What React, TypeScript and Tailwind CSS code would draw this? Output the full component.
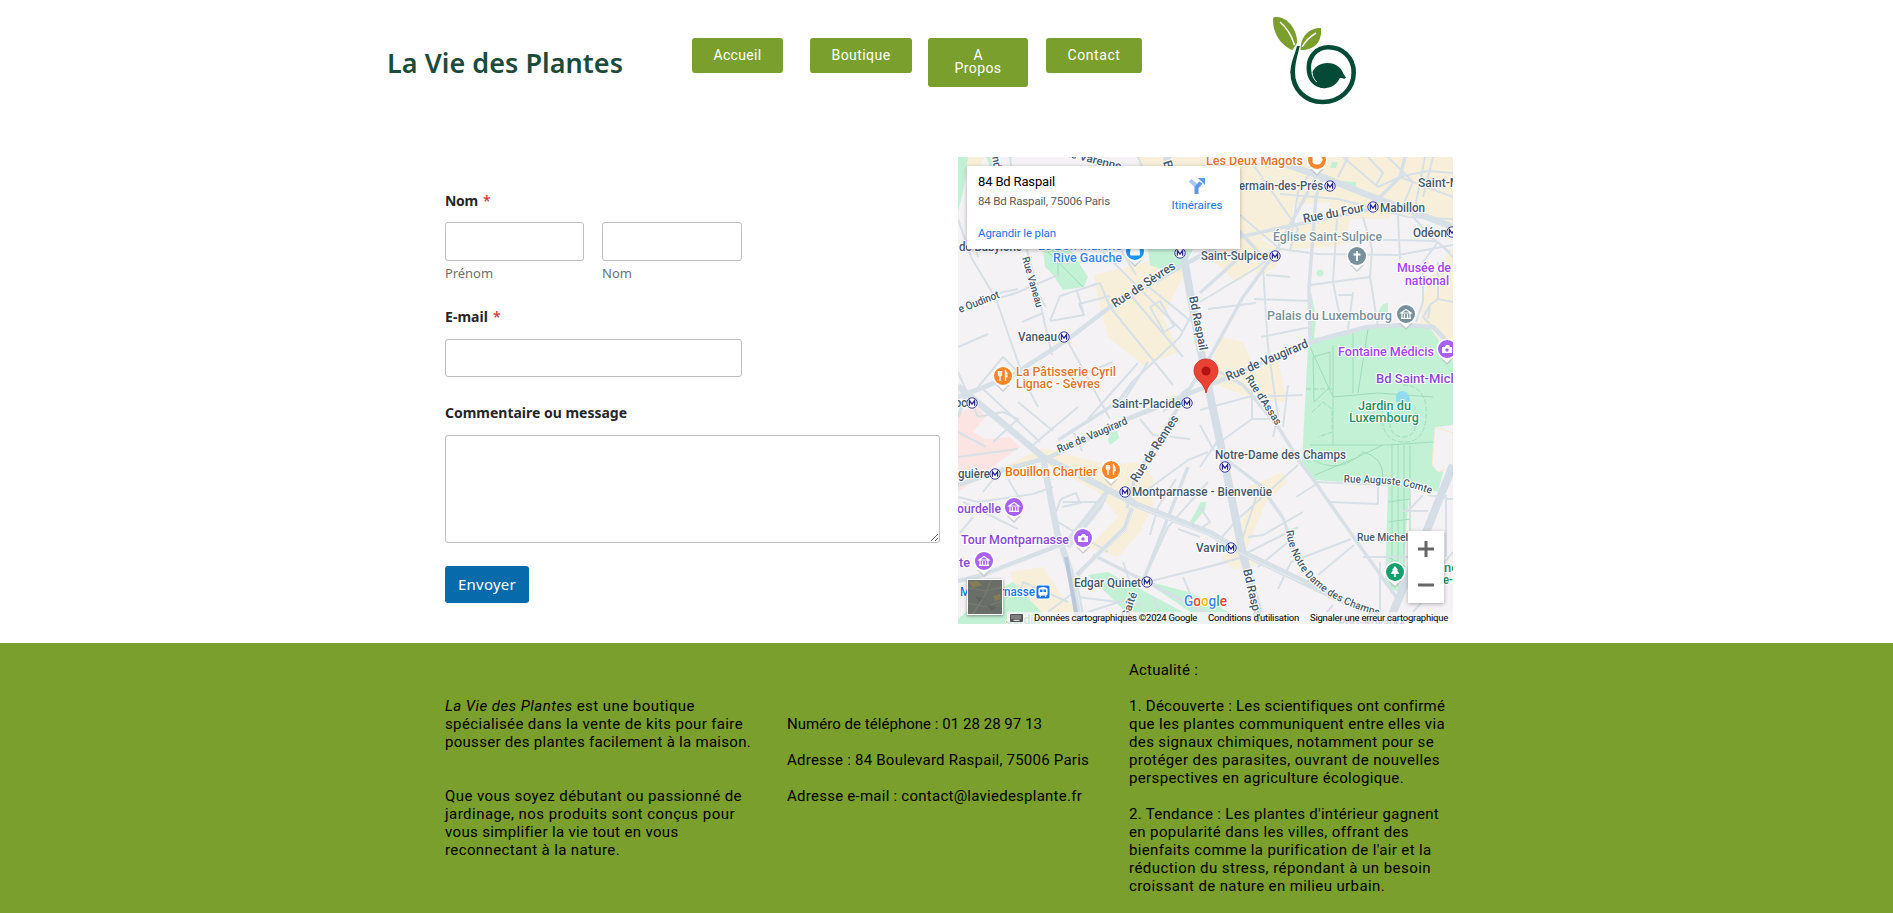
import { useLayoutEffect, useRef, useState } from 'react';
import type { ReactNode } from 'react';

/** A single line of text whose tracking is adjusted to fill `width` pixels. */
function Line({ width, className = '', children }: { width: number; className?: string; children: ReactNode }) {
  const ref = useRef<HTMLSpanElement>(null);
  const [spacing, setSpacing] = useState(0);
  useLayoutEffect(() => {
    const el = ref.current;
    if (!el) return;
    const count = (el.textContent ?? '').length;
    const natural = el.getBoundingClientRect().width - spacing * count;
    setSpacing((width - natural) / count);
  }, [width]);
  return (
    <span ref={ref} className={`inline-block whitespace-nowrap ${className}`} style={{ letterSpacing: `${spacing}px` }}>
      {children}
    </span>
  );
}

const NAV = [
  { label: ['Accueil'], widths: [48], box: 'ml-0 w-[91px] h-[35px]' },
  { label: ['Boutique'], widths: [59], box: 'ml-[27px] w-[102px] h-[35px]' },
  { label: ['A', 'Propos'], widths: [9, 47], box: 'ml-4 w-[100px] h-[49px]' },
  { label: ['Contact'], widths: [53], box: 'ml-[18px] w-[96px] h-[35px]' },
];

function Logo() {
  return (
    <svg className="mt-4 ml-[131px] h-[90px] w-[86px]" viewBox="1273 16 86 90" fill="none">
      <path d="M1273.300 17.500C1286 14.500 1297.500 29 1297 43L1292.500 50C1281 46 1271.500 32 1273.300 17.500Z" fill="#7a9f2d" />
      <path d="M1280 22C1287 28 1291.500 35 1294.500 45" stroke="#fff" strokeWidth="1.500" />
      <path d="M1300.500 50C1300.500 36 1309 28 1321 28C1322 42 1315 50 1300.500 50Z" fill="#7a9f2d" />
      <path d="M1302 47C1306 40 1311 36 1316 33" stroke="#fff" strokeWidth="1.500" />
      <path
        d="M1297 46L1299.800 46C1297.500 56 1295.200 62 1295 73H1290.500C1290.500 62 1294.500 56 1297 46Z"
        fill="#044b37"
      />
      <path
        d="M1292.700 72C1292.700 89 1305 102 1322.500 102C1340 102 1353.700 89.500 1353.700 72.500C1353.700 57 1342 47.300 1328.500 47.300C1316.500 47.300 1308.800 56.500 1308.800 67.500C1308.800 79 1315 86 1325 86"
        stroke="#044b37"
        strokeWidth="4.600"
        strokeLinecap="round"
      />
      <path d="M1312.500 72C1315 66.500 1320 63 1327.500 63C1335.500 63 1341 67 1343.500 74L1346 77.500L1344.500 78.800L1340 77.800C1337 84.500 1331 88.200 1323.500 88.200C1316 87.500 1312.500 80 1312.500 72Z" fill="#044b37" />
      <path d="M1312 73C1312.800 77 1314 79.500 1316.800 82" stroke="#dfe9e5" strokeWidth="1" />
    </svg>
  );
}

function Header() {
  return (
    <header className="flex h-[157px] items-start pl-[387px]">
      <h1 className="mt-[45px] w-[305px] font-['Noto_Sans'] text-[27px] leading-[36px] font-semibold text-[#1c4b3c]">
        <Line width={236}>La Vie des Plantes</Line>
      </h1>
      <nav className="flex items-start pt-[38px]">
        {NAV.map((item) => (
          <a
            key={item.label.join(' ')}
            href="#"
            className={`flex flex-col items-center rounded-[3px] bg-[#7a9f2d] pt-[11px] text-[14px] leading-[13px] text-white ${item.box}`}
          >
            {item.label.map((word, i) => (
              <Line key={word} width={item.widths[i]}>
                {word}
              </Line>
            ))}
          </a>
        ))}
      </nav>
      <Logo />
    </header>
  );
}

function Label({ text, width, required }: { text: string; width: number; required?: boolean }) {
  return (
    <label className="flex h-5 gap-[5px] text-[14px] leading-5 font-bold text-[#262628]">
      <Line width={width}>{text}</Line>
      {required && <span className="font-medium text-[#d63637]">*</span>}
    </label>
  );
}

const FIELD = 'block rounded-[3px] border border-[#bfbfbf] bg-white outline-none';

function ContactForm() {
  return (
    <form className="w-[495px] pt-[34px] font-['Noto_Sans']">
      <Label text="Nom" width={33} required />
      <div className="mt-[11px] flex gap-[18px]">
        <div className="w-[139px]">
          <input className={`${FIELD} h-[39px] w-full`} />
          <div className="mt-[2px] h-[21px] text-[13px] leading-5 text-[#6f6f71]">
            <Line width={48}>Prénom</Line>
          </div>
        </div>
        <div className="w-[140px]">
          <input className={`${FIELD} h-[39px] w-full`} />
          <div className="mt-[2px] h-[21px] text-[13px] leading-5 text-[#6f6f71]">
            <Line width={30}>Nom</Line>
          </div>
        </div>
      </div>
      <div className="mt-[23px]">
        <Label text="E-mail" width={43} required />
      </div>
      <input className={`${FIELD} mt-3 h-[38px] w-[297px]`} />
      <div className="mt-[26px]">
        <Label text="Commentaire ou message" width={182} />
      </div>
      <textarea className={`${FIELD} mt-3 h-[108px] w-full resize`} />
      <button type="button" className="mt-[23px] flex h-[37px] w-[84px] items-center rounded-[3px] bg-[#066aab] pb-px pl-[13px] text-[15px] leading-5 text-white">
        <Line width={58}>Envoyer</Line>
      </button>
    </form>
  );
}

type MapLabel = { t: string; x: number; y: number; w: number; a?: number; c?: string; s?: number };

const SLATE = '#44586a';
const LABELS: MapLabel[] = [
  { t: 'de Varenne', x: 106, y: -1, w: 58, a: 14, s: 11 },
  { t: 'nd', x: 34, y: 0, w: 12, a: 80, s: 11 },
  { t: 'B', x: 205, y: 5, w: 8, a: 72, s: 12 },
  { t: 'de Babylone', x: 1, y: 94, w: 63 },
  { t: 'Le Bon Marché', x: 80, y: 93, w: 84, c: '#3487e8' },
  { t: 'Rive Gauche', x: 95, y: 105, w: 69, c: '#3487e8' },
  { t: 'Rue Vaneau', x: 64, y: 101, w: 52, a: 74, s: 10.5 },
  { t: 'Rue de Sèvres', x: 157, y: 151, w: 73, a: -33 },
  { t: 'e Oudinot', x: 2, y: 156, w: 43, a: -21, s: 11 },
  { t: 'Vaneau', x: 60, y: 184, w: 39 },
  { t: 'La Pâtisserie Cyril', x: 58, y: 218.5, w: 100, c: '#e0752a' },
  { t: 'Lignac - Sèvres', x: 58, y: 231, w: 84, c: '#e0752a' },
  { t: 'Bd Raspail', x: 231, y: 140, w: 55, a: 79, s: 12 },
  { t: 'Les Deux Magots', x: 248, y: 8, w: 97, c: '#e0752a' },
  { t: 'ermain-des-Prés', x: 281, y: 33, w: 84 },
  { t: 'Saint-Michel', x: 460, y: 30, w: 68 },
  { t: 'Mabillon', x: 422, y: 55, w: 45 },
  { t: 'Rue du Four', x: 346, y: 66, w: 62, a: -11 },
  { t: 'Odéon', x: 455, y: 80, w: 34 },
  { t: 'Église Saint-Sulpice', x: 315, y: 84, w: 109, c: '#78909c' },
  { t: 'Saint-Sulpice', x: 243, y: 103, w: 67 },
  { t: 'Musée de', x: 439, y: 115, w: 54, c: '#a142f4' },
  { t: 'national', x: 447, y: 128, w: 44, c: '#a142f4' },
  { t: 'Palais du Luxembourg', x: 309, y: 163, w: 125, c: '#78909c' },
  { t: 'Rue de Vaugirard', x: 270, y: 224, w: 88, a: -23 },
  { t: 'Fontaine Médicis', x: 380, y: 199, w: 96, c: '#a142f4' },
  { t: 'Bd Saint-Michel', x: 418, y: 226, w: 92, c: '#8947d6' },
  { t: 'oc', x: -3, y: 250, w: 12 },
  { t: 'Saint-Placide', x: 154, y: 251, w: 69 },
  { t: 'Rue de Vaugirard', x: 101, y: 296, w: 75, a: -23, s: 11 },
  { t: 'Rue de Rennes', x: 179, y: 326, w: 77, a: -57 },
  { t: 'guière', x: 0, y: 321, w: 32 },
  { t: 'Bouillon Chartier', x: 47, y: 319, w: 92, c: '#e8710a' },
  { t: 'Montparnasse - Bienvenüe', x: 174, y: 339, w: 140 },
  { t: 'ourdelle', x: -1, y: 355.5, w: 44, c: '#8947d6' },
  { t: 'Tour Montparnasse', x: 3, y: 387, w: 108, c: '#8947d6' },
  { t: 'te', x: 1, y: 410, w: 11, c: '#8947d6' },
  { t: 'Montparnasse', x: 2, y: 438.5, w: 75, c: '#1a73e8' },
  { t: 'Edgar Quinet', x: 116, y: 429.5, w: 67 },
  { t: 'Gaîté', x: 170, y: 462, w: 27, a: -70, s: 11 },
  { t: 'Jardin', x: 48, y: 467, w: 34, c: '#2b9a6b' },
  { t: 'Port-Royal', x: 380, y: 470, w: 54 },
  { t: 'Jardin du', x: 400, y: 253, w: 53, c: '#25905f' },
  { t: 'Luxembourg', x: 391, y: 265, w: 70, c: '#25905f' },
  { t: "Rue d'Assas", x: 287, y: 221, w: 57, a: 57, s: 11 },
  { t: 'Notre-Dame des Champs', x: 257, y: 302, w: 131 },
  { t: 'Rue Michelet', x: 399, y: 384, w: 60, s: 11.5 },
  { t: 'Vavin', x: 238, y: 395, w: 29 },
  { t: 'Bd Raspail', x: 285, y: 413, w: 55, a: 77, s: 12 },
  { t: 'ne', x: 486, y: 415, w: 14, c: '#25905f' },
  { t: 'e-F', x: 485, y: 427, w: 16, c: '#25905f' },
];

const METRO: [number, number][] = [
  [106, 180], [222, 96], [372, 29], [415, 50], [494, 75], [317, 99], [14, 246],
  [229, 246], [37, 317], [167, 335], [189, 425], [267, 310], [273, 391], [441, 468],
];

const PINS: { x: number; y: number; c: string; k: string }[] = [
  { x: 45, y: 219, c: '#f5862b', k: 'food' },
  { x: 153, y: 313, c: '#f5862b', k: 'food' },
  { x: 359, y: 3, c: '#f5862b', k: 'cup' },
  { x: 177, y: 94, c: '#1a94f5', k: 'bag' },
  { x: 399, y: 99, c: '#78909c', k: 'cross' },
  { x: 448, y: 157, c: '#78909c', k: 'museum' },
  { x: 489, y: 192, c: '#a860f5', k: 'camera' },
  { x: 56, y: 350, c: '#a860f5', k: 'museum' },
  { x: 125, y: 381, c: '#a860f5', k: 'camera' },
  { x: 26, y: 404, c: '#a860f5', k: 'museum' },
  { x: 437, y: 415, c: '#17a06d', k: 'tree' },
];

function Glyph({ kind }: { kind: string }) {
  switch (kind) {
    case 'food':
      return <path d="M-3 5V0M-4.500-5V-1.500Q-4.500 0-3 0T-1.500-1.500V-5M-3-5V-1M2.500 5V-5Q4.500-3 4 .5H2.500" stroke="#fff" strokeWidth="1.300" fill="none" />;
    case 'cup':
      return <path d="M-4-3H4V2Q4 4 1 4H-1Q-4 4-4 2ZM4-2Q7-1 4 1.500" stroke="#fff" strokeWidth="1" fill="#fff" />;
    case 'bag':
      return <path d="M-4-3H4L4.500 4H-4.500ZM-2-3Q0-7 2-3" fill="#fff" stroke="#fff" />;
    case 'cross':
      return <path d="M0-5V5M-3.500-1.500H3.500" stroke="#fff" strokeWidth="1.800" />;
    case 'museum':
      return <path d="M-5-1L0-4.500L5-1ZM-4-1V4M4-1V4M-1.500 0V4M1.500 0V4M-5 4.300H5" stroke="#fff" strokeWidth="1.200" fill="none" />;
    case 'camera':
      return (
        <g>
          <path d="M-5-2H-2L-1-4H2L3-2H5V4H-5Z" fill="#fff" />
          <circle cy="1" r="1.700" fill="#a860f5" />
        </g>
      );
    default:
      return <path d="M0-6L3-2H2L4.500 2H.8V5H-.8V2H-4.500L-2-2H-3Z" fill="#fff" />;
  }
}

const THIN_ROADS = [
  'M0 62L13 100L38 142L67 225L80 250', 'M38 142L58 136L100 118', 'M0 152L45 135L60 132', 'M52 0L60 60L75 115L94 198',
  'M20 100L10 60', 'M64 165L85 156M70 120L88 150', 'M92 164L102 139L142 126L152 150M92 164L126 158L121 147L152 139M126 158L119 134',
  'M0 215L20 260M0 190L30 177M20 230L45 200L60 215', 'M120 250L75 288M155 205L118 220M180 206L130 262', 'M25 232L82 285M60 245L95 274',
  'M109 183L152 262M152 150L215 228M170 135L225 200M185 125L240 170', 'M192 150L202 144L216 169L206 175Z', 'M145 95L225 175M160 88L178 118',
  'M172 227L222 180L240 145M165 245L190 205', 'M182 262L195 278L232 282M172 262L230 240M205 255L230 231', 'M114 272L124 294',
  'M20 260L45 255L60 262L35 285M0 275L28 290M0 300L60 292', 'M0 340L20 345L75 337L95 330M25 335L45 310M5 345L60 372M15 360L2 376',
  'M103 342L118 336L122 346L104 350M103 342L98 355M50 322L65 347L55 355', 'M140 345L105 345M100 365L150 395',
  'M192 378L200 350L218 322M185 336L230 303L250 295', 'M185 424L210 370L250 325', 'M189 425L270 405M165 405L172 425M119 440L185 448M130 455L170 442',
  'M60 440L65 425L110 445M90 455L120 432', 'M240 60L200 82M180 0L198 40L225 90', 'M282 58L322 92L300 110L242 145', 'M245 30L282 62M290 0L340 72L332 92',
  'M322 92L360 97L440 98L495 88', 'M305 110L310 190L320 260L315 280', 'M296 142L352 144M250 152L298 146M308 118L332 120M303 180L352 170',
  'M352 128L412 120L414 92L405 60M379 62L375 125L382 160M395 135L390 172M380 138L394 138M412 120L420 170',
  'M322 37L380 42L450 60L495 62M334 75L340 35L362 0', 'M385 0L420 30L442 20L495 40M430 0L455 25L440 60L442 102M467 0L455 60L478 85',
  'M392 82L478 84L492 95M480 85L465 105L465 145L458 165M480 85L495 100', 'M440 20L470 14L495 16M475 0L465 40',
  'M472 148L480 142L495 145M472 148L465 160L485 180M480 142L480 105M472 148L470 162', 'M390 0L380 20M410 0L425 16L418 28',
  'M242 253L290 240L345 238M255 290L294 262L319 262M294 262V230M325 270L330 228', 'M242 310L262 280M242 268L255 292L269 303',
  'M262 382L280 362L340 308M290 380L305 378L345 355M302 328L285 380M285 398L340 370', 'M338 340L357 328M370 345L420 347V330M357 325L430 328',
  'M242 412L285 400M300 410L330 385M320 432L333 405L393 382M360 418L396 388M405 400L450 400M399 380L442 384', 'M465 338L450 354M445 354H470M470 338L495 342M488 338V400M470 425L495 395M455 455L486 420M365 460L375 448M422 455V405',
  'M242 350L252 365L242 372M242 380L220 372', 'M195 440L205 465M225 420L245 467',
];

const MID_ROADS = [
  'M369 0L360 16L317 96L285 140L252 200L232 231L177 321L169 351', 'M282 80L322 71L409 53L442 20L447 0', 'M242 136L282 100L317 96',
  'M262 215L285 228L319 268L342 305L357 325L399 385L439 441', 'M269 303L302 328L325 361L342 408L372 436L429 462', 'M352 185L351 130L358 40L365 18',
  'M242 30L282 75L305 100', 'M135 398L189 425L252 458L290 468', 'M230 310L185 424', 'M0 260L8 238M100 283L160 245L175 225',
];

const WIDE_ROADS = [
  'M0 240L52 220L109 183L152 150L222 110L262 88L282 78', 'M495 190L475 170L445 168L409 170L352 185L259 225L172 261L92 300L35 316L0 328',
  'M149 335L109 385L25 418L0 424', 'M174 351L167 371L119 418', 'M177 345L150 332L142 350L110 390',
];

const MAIN_ROADS = [
  'M0 229L35 258L85 300L145 330L179 348L252 376L289 398L352 428L430 465', 'M305 0L365 20L415 40L495 70', 'M85 301L99 375L117 428L125 468',
];

function Roads({ paths, w }: { paths: string[]; w: number }) {
  return (
    <g fill="none" stroke="#d7e0e7" strokeWidth={w} strokeLinejoin="round">
      {paths.map((d) => (
        <path key={d} d={d} />
      ))}
    </g>
  );
}

function MapCanvas() {
  return (
    <svg className="block h-[467px] w-[495px] font-['Roboto']" viewBox="0 0 495 467">
      <rect width="495" height="467" fill="#f4f2f4" />
      <g fill="#f8efda">
        <path d="M0 0H26L20 20H0ZM180 0H245V14H180ZM136 118L225 96L230 110L205 160L222 195L185 208L150 180L142 150Z" />
        <path d="M240 0H495V68L435 55L420 80L372 90L325 92L300 112L278 125L240 90Z" />
        <path d="M282 85L322 80L318 110L300 120ZM465 140L480 110L495 90V192L462 168Z" />
        <path d="M262 180L285 185L298 215L320 200L328 245L300 243L250 225ZM48 309L85 291L150 308L180 305L195 320V350L182 375L160 400L130 390L160 360L140 335L85 305Z" />
        <path d="M290 330L325 315L330 325L308 345L288 395L280 372L295 345ZM262 400L280 390L300 408L275 412ZM52 415L85 410L105 440L125 455L90 467L60 440Z" />
      </g>
      <path d="M392 62H436V82H388ZM335 48L372 45L368 62L335 68ZM302 82L330 78L332 92L318 90Z" fill="#f4f2f4" />
      <path d="M0 255L20 250L28 260L15 275L28 282L52 280L62 290L0 335Z" fill="#fce4e3" />
      <g fill="#c3f1d5">
        <path d="M0 0H10L5 35L0 55ZM28 0H42L36 18ZM85 92L112 92L130 120L126 130L105 133L95 118L87 110ZM190 92H235L228 106L210 115L192 108Z" />
        <path d="M350 186L409 169L472 171L482 185L495 205V268L477 270L474 308L485 315L480 335L455 328L452 331L442 436L427 428L430 328L357 323L344 305L348 228Z" />
        <path d="M353 135L358 160L356 183L352 183ZM374 5L380 5L378 11L372 11ZM385 24L398 25L398 32L386 30ZM425 147L430 146V155L420 155Z" />
        <circle cx="362" cy="116" r="3.500" />
        <path d="M152 275L159 274L161 281L152 288L150 283ZM231 367L243 345L248 345L247 353L235 367Z" />
        <path d="M130 418L150 415L225 455L290 467H180ZM0 462L20 445L55 425L95 467H0ZM185 423L230 435L262 450L290 467H250Z" />
        <path d="M456 290L470 290L472 308L485 315L480 333L455 322Z" />
      </g>
      <g fill="none" stroke="#9fdcba" strokeWidth="1">
        <path d="M352 190L375 240L420 236L475 240M375 188V288M352 288H430L475 285M395 175V236M410 172L400 236M355 200L372 195V230L356 245ZM350 300Q380 320 405 295Q425 300 425 320M357 318L400 300L425 288M434 288V430M440 288V430M446 288V430M452 288V400" />
        <path d="M425 250Q420 285 447 285Q470 285 468 250Q465 228 445 228M432 252V270Q435 280 446 280Q458 278 457 268V250M348 232L374 232M354 255L365 245L374 252V275L360 280" strokeDasharray="5 2" />
        <path d="M430 345L452 342M430 365L452 362M430 385L450 382M430 400L448 410M90 95L125 130M100 95V120" />
      </g>
      <path d="M438 243Q437 234 445 234Q453 236 452 246L438 245Z" fill="#90dbef" />
      <path d="M474 308L477 270L495 276V310L480 315Z" fill="#f4f2f4" stroke="#f8e9c8" />
      <Roads paths={THIN_ROADS} w={2} />
      <Roads paths={MID_ROADS} w={3.4} />
      <Roads paths={WIDE_ROADS} w={4.6} />
      <Roads paths={MAIN_ROADS} w={6.5} />
      <g fill="none" stroke="#d5dee6" strokeWidth="8">
        <path d="M209 0L225 96L240 180L252 238L267 308L285 398L304 468" />
        <path d="M495 308L455 408L430 467" />
      </g>
      <path d="M108 400L120 467" stroke="#b9c8d8" strokeWidth="4" />
      <g fill="none" stroke="#f4f2f4" strokeWidth="0.800" opacity=".8">
        <path d="M180 350L252 378L289 400L345 426M149 338L109 388L30 418M174 355L169 371L125 415M110 380L125 467" />
      </g>

      <g fontWeight="500" stroke="#fff" strokeWidth="2.200" strokeLinejoin="round" paintOrder="stroke">
        {LABELS.map((l, i) => (
          <text
            key={i}
            transform={`translate(${l.x} ${l.y}) rotate(${l.a ?? 0})`}
            fill={l.c ?? SLATE}
            fontSize={l.s ?? 12.5}
            textLength={l.w}
            lengthAdjust="spacingAndGlyphs"
          >
            {l.t}
          </text>
        ))}
        <path id="comte" d="M386 325.500C412 326 445 325 475 338" fill="none" stroke="none" />
        <path id="champs" d="M328 374C333 406 352 442 425 460" fill="none" stroke="none" />
        <text fill={SLATE} fontSize="10.500">
          <textPath href="#comte" textLength="88" lengthAdjust="spacingAndGlyphs">Rue Auguste Comte</textPath>
        </text>
        <text fill={SLATE} fontSize="10.500">
          <textPath href="#champs" textLength="134" lengthAdjust="spacingAndGlyphs">Rue Notre Dame des Champs</textPath>
        </text>
      </g>

      {METRO.map(([x, y]) => (
        <g key={`${x}-${y}`} transform={`translate(${x} ${y})`}>
          <circle r="5.200" fill="#fff" stroke="#3d3d9c" strokeWidth="1" />
          <path d="M-2.600 2.700V-2.500L0 1.200L2.600-2.500V2.700" fill="none" stroke="#29298f" strokeWidth="1.300" />
        </g>
      ))}

      {PINS.map((p) => (
        <g key={`${p.x}-${p.y}`} transform={`translate(${p.x} ${p.y})`}>
          <path d="M-7 9L0 16L7 9Z" fill="#b9bfc5" opacity=".7" />
          <path d="M-10.500 0A10.500 10.500 0 1 1 10.500 0C10.500 7 4 9 0 14C-4 9-10.500 7-10.500 0Z" fill="#fff" />
          <circle r="9" fill={p.c} />
          <Glyph kind={p.k} />
        </g>
      ))}

      <g transform="translate(85 435)">
        <rect x="-7" y="-7" width="14" height="14" rx="2" fill="#1a73e8" stroke="#fff" />
        <path d="M-4-3.500Q0-5.500 4-3.500V3H-4ZM-3 5L-2 3M3 5L2 3" fill="#fff" stroke="#fff" />
        <path d="M-3-2.500H-.5V0H-3ZM.5-2.500H3V0H.5Z" fill="#1a73e8" />
      </g>

      <path d="M236 214C236 206.500 241.500 202 248 202C254.500 202 260 206.500 260 214C260 223 250 225 248 236C246 225 236 223 236 214Z" fill="#ea4335" stroke="#c5221f" strokeWidth=".7" />
      <circle cx="248" cy="214" r="4.500" fill="#b31412" />

      <text x="226" y="449" fontSize="14.500" fontWeight="500" textLength="43" stroke="#fff" strokeWidth="2" paintOrder="stroke" lengthAdjust="spacingAndGlyphs">
        <tspan fill="#4285f4">G</tspan>
        <tspan fill="#ea4335">o</tspan>
        <tspan fill="#fbbc04">o</tspan>
        <tspan fill="#4285f4">g</tspan>
        <tspan fill="#34a853">l</tspan>
        <tspan fill="#ea4335">e</tspan>
      </text>
    </svg>
  );
}

function MapPanel() {
  return (
    <section className="relative h-[467px] w-[495px] overflow-hidden">
      <MapCanvas />

      <div className="absolute top-[9px] left-[9px] flex h-[83px] w-[273px] justify-between bg-white pl-[11px] shadow-[0_1px_4px_rgba(0,0,0,0.3)]">
        <div className="pt-[7px]">
          <div className="h-[19px] text-[13px] leading-[18px] text-black">
            <Line width={77}>84 Bd Raspail</Line>
          </div>
          <div className="h-[18px] text-[11.500px] leading-[18px] text-[#5b5b5b]">
            <Line width={132}>84 Bd Raspail, 75006 Paris</Line>
          </div>
          <div className="mt-[14px] h-[18px] text-[11.500px] leading-[18px] text-[#1a73e8]">
            <Line width={78}>Agrandir le plan</Line>
          </div>
        </div>
        <div className="flex w-[86px] flex-col items-center pt-[12px] text-[11.500px] leading-4 text-[#1a73e8]">
          <svg className="h-4 w-4" viewBox="0 0 16 16" fill="none">
            <path d="M1 2.200L8 8.500" stroke="#a9c8f5" strokeWidth="4" />
            <path d="M7.500 16V9.500L12 4.500" stroke="#5e97e4" strokeWidth="4" />
            <path d="M9 0H16V7Z" fill="#5e97e4" />
          </svg>
          <span className="mt-[3px]">
            <Line width={51}>Itinéraires</Line>
          </span>
        </div>
      </div>

      <div className="absolute top-[374px] left-[450px] flex h-[72px] w-[36px] flex-col items-center justify-around bg-white shadow-[0_1px_4px_rgba(0,0,0,0.3)]">
        <svg className="h-4 w-4" viewBox="0 0 16 16">
          <path d="M6.500 0H9.500V6.500H16V9.500H9.500V16H6.500V9.500H0V6.500H6.500Z" fill="#666" />
        </svg>
        <svg className="h-4 w-4" viewBox="0 0 16 16">
          <path d="M0 6.500H16V9.500H0Z" fill="#666" />
        </svg>
      </div>

      <svg className="absolute top-[422px] left-[9px] h-[36px] w-[36px] shadow-[0_1px_3px_rgba(0,0,0,0.4)]" viewBox="0 0 36 36">
        <rect width="36" height="36" fill="#fff" />
        <rect x="1" y="1" width="34" height="34" fill="#696e69" />
        <path d="M1 9L20 12L35 8M6 35L18 16L24 1M1 24L18 28L35 22" stroke="#787c70" strokeWidth="1.200" fill="none" />
        <path d="M2 3L10 2L15 6L6 9ZM26 17L33 15L34 20L28 22Z" fill="#857d55" />
        <path d="M8 17L16 19L12 23ZM20 26L29 28L25 32Z" fill="#5e645e" />
      </svg>

      <div className="absolute right-0 bottom-0 flex h-[12px] items-center bg-[#f5f5f5]/80 text-[9.500px] leading-[12px] text-black">
        <svg className="ml-[3px] h-[8px] w-[13px]" viewBox="0 0 13 8">
          <rect width="13" height="8" rx="1" fill="#555" />
          <path d="M1.500 2H11.500M1.500 4H11.500" stroke="#fff" strokeWidth="1" strokeDasharray="1 1" />
          <path d="M3.500 6.300H9.500" stroke="#fff" strokeWidth="1" />
        </svg>
        <span className="ml-[11px] h-[12px] w-[174px]">
          <Line width={163}>Données cartographiques ©2024 Google</Line>
        </span>
        <span className="h-[12px] w-[102px]">
          <Line width={91}>Conditions d'utilisation</Line>
        </span>
        <span className="mr-[5px] h-[12px] w-[138px]">
          <Line width={138}>Signaler une erreur cartographique</Line>
        </span>
      </div>
    </section>
  );
}

type Row = { t: ReactNode; w: number };

function Paragraph({ rows, className = '' }: { rows: Row[]; className?: string }) {
  return (
    <p className={`flex flex-col items-start ${className}`}>
      {rows.map((r, i) => (
        <Line key={i} width={r.w}>
          {r.t}
        </Line>
      ))}
    </p>
  );
}

function Footer() {
  return (
    <footer className="flex h-[270px] bg-[#7a9f2d] pl-[445px] text-[15px] leading-[18px] text-black">
      <div className="w-[342px] pt-[54px]">
        <Paragraph
          rows={[
            { t: <><em>La Vie des Plantes</em> est une boutique</>, w: 250 },
            { t: 'spécialisée dans la vente de kits pour faire', w: 298 },
            { t: 'pousser des plantes facilement à la maison.', w: 306 },
          ]}
        />
        <Paragraph
          className="mt-9"
          rows={[
            { t: 'Que vous soyez débutant ou passionné de', w: 297 },
            { t: 'jardinage, nos produits sont conçus pour', w: 290 },
            { t: 'vous simplifier la vie tout en vous', w: 233 },
            { t: 'reconnectant à la nature.', w: 175 },
          ]}
        />
      </div>
      <div className="flex w-[342px] flex-col gap-[18px] pt-[72px]">
        <Paragraph rows={[{ t: 'Numéro de téléphone : 01 28 28 97 13', w: 255 }]} />
        <Paragraph rows={[{ t: 'Adresse : 84 Boulevard Raspail, 75006 Paris', w: 302 }]} />
        <Paragraph rows={[{ t: 'Adresse e-mail : contact@laviedesplante.fr', w: 295 }]} />
      </div>
      <div className="flex flex-col gap-[18px] pt-[18px]">
        <Paragraph rows={[{ t: 'Actualité :', w: 69 }]} />
        <Paragraph
          rows={[
            { t: '1. Découverte : Les scientifiques ont confirmé', w: 315 },
            { t: 'que les plantes communiquent entre elles via', w: 316 },
            { t: 'des signaux chimiques, notamment pour se', w: 305 },
            { t: 'protéger des parasites, ouvrant de nouvelles', w: 311 },
            { t: 'perspectives en agriculture écologique.', w: 275 },
          ]}
        />
        <Paragraph
          rows={[
            { t: "2. Tendance : Les plantes d'intérieur gagnent", w: 310 },
            { t: 'en popularité dans les villes, offrant des', w: 280 },
            { t: "bienfaits comme la purification de l'air et la", w: 302 },
            { t: 'réduction du stress, répondant à un besoin', w: 302 },
            { t: 'croissant de nature en milieu urbain.', w: 256 },
          ]}
        />
      </div>
    </footer>
  );
}

export default function App() {
  return (
    <div className="h-[913px] w-[1893px] overflow-hidden bg-white font-['Roboto',sans-serif]">
      <Header />
      <main className="flex h-[486px] gap-[18px] pl-[445px]">
        <ContactForm />
        <MapPanel />
      </main>
      <Footer />
    </div>
  );
}
